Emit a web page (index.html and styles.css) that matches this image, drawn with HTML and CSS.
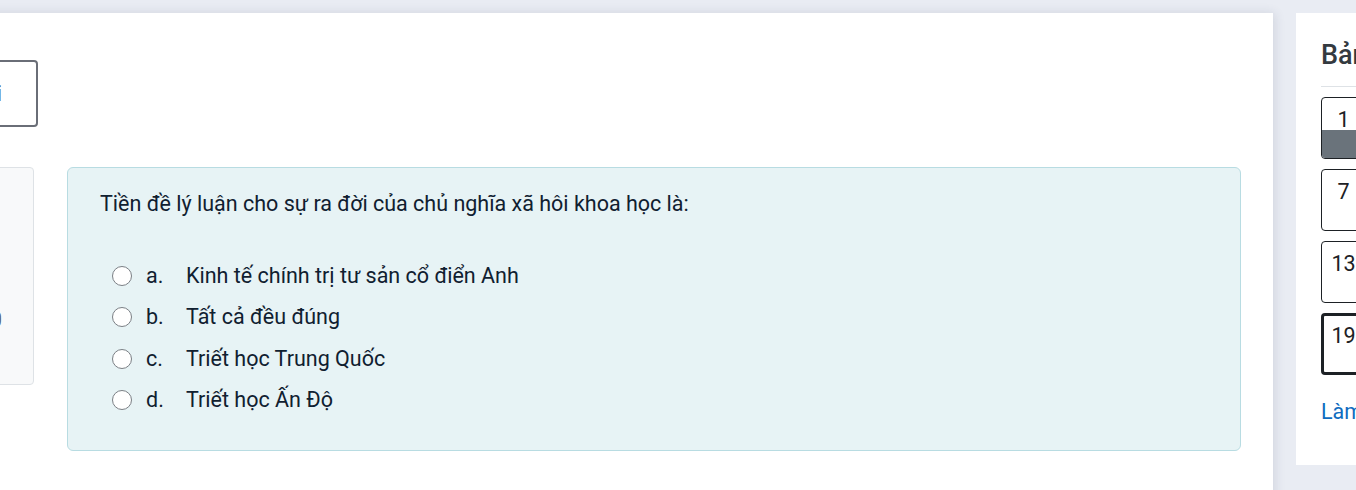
FILE: index.html
```html
<!DOCTYPE html>
<html lang="vi">
<head>
<meta charset="utf-8">
<link rel="stylesheet" href="styles.css">
</head>
<body>
<div class="page">
  <main class="main">
    <div class="topbar">
      <button class="btn-outline">Lưu và thoát khỏi bài thi</button>
    </div>
    <div class="que">
      <div class="info">
        <h3 class="no">Câu hỏi <b>19</b></h3>
        <div class="state">Chưa trả lời</div>
        <div class="grade">Đạt điểm 1,00</div>
      </div>
      <div class="content">
        <div class="formulation">
          <div class="qtext">Tiền đề lý luận cho sự ra đời của chủ nghĩa xã hôi khoa học là:</div>
          <div class="answer">
            <label class="opt"><span class="radio"></span><span class="letter">a.</span><span>Kinh tế chính trị tư sản cổ điển Anh</span></label>
            <label class="opt"><span class="radio"></span><span class="letter">b.</span><span>Tất cả đều đúng</span></label>
            <label class="opt"><span class="radio"></span><span class="letter">c.</span><span>Triết học Trung Quốc</span></label>
            <label class="opt"><span class="radio"></span><span class="letter">d.</span><span>Triết học Ấn Độ</span></label>
          </div>
        </div>
      </div>
    </div>
  </main>
  <aside class="side">
    <h2 class="side-title">Bảng câu hỏi</h2>
    <div class="qnav">
      <div class="qbtn answered"><span class="num">1</span><span class="fill"></span></div>
      <div class="qbtn"><span class="num">7</span><span class="fill"></span></div>
      <div class="qbtn"><span class="num">13</span><span class="fill"></span></div>
      <div class="qbtn current"><span class="num">19</span><span class="fill"></span></div>
    </div>
    <a class="finish" href="#">Làm xong...</a>
  </aside>
</div>
</body>
</html>
```

FILE: styles.css
```css
* { box-sizing: border-box; }
html, body { margin: 0; padding: 0; }
body {
  width: 1356px;
  height: 490px;
  overflow: hidden;
  background: #e9ecf3;
  font-family: Roboto, "Noto Sans", sans-serif;
  color: #1d2125;
}
.page {
  display: flex;
  align-items: flex-start;
  gap: 23px;
  padding-top: 13px;
  margin-left: -300px;
}
.main {
  flex: 0 0 1573px;
  height: 520px;
  background: #fff;
  box-shadow: 2px 0 10px rgba(40, 50, 80, 0.12);
  padding: 0 32px 0 0;
}
.topbar {
  height: 154px;
  padding-top: 47px;
  display: flex;
  justify-content: flex-start;
}
.btn-outline {
  margin-left: 38px;
  width: 300px;
  height: 67px;
  border: 2px solid #6a6e77;
  border-radius: 4px;
  background: #fff;
  color: #3d4046;
  font-family: Roboto, sans-serif;
  font-size: 21.5px;
  text-align: right;
  padding: 0 34px 0 0;
  white-space: nowrap;
}
.que {
  display: flex;
  align-items: flex-start;
  gap: 33px;
}
.info {
  margin-left: 134px;
  width: 200px;
  height: 218px;
  background: #f8f9fa;
  border: 1px solid #dee2e6;
  border-radius: 4px;
  padding: 14px 31px 14px 10px;
  font-size: 21.5px;
  color: #5a5f66;
}
.info .no { font-size: 21.5px; font-weight: 400; margin: 0 0 40px; white-space: nowrap; }
.info .state { margin-bottom: 34px; white-space: nowrap; }
.info .grade { text-align: right; white-space: nowrap; line-height: 28px; }
.content { flex: 1; }
.formulation {
  width: 1174px;
  height: 284px;
  background: #e7f3f5;
  border: 1px solid #b8dce2;
  border-radius: 6px;
  padding: 22px 32px;
  font-size: 21.5px;
  color: #102030;
}
.qtext { line-height: 28px; margin-bottom: 43px; }
.answer { padding-left: 12px; display: flex; flex-direction: column; gap: 11.3px; }
.opt { display: flex; align-items: center; height: 30px; line-height: 30px; }
.radio {
  width: 20px;
  height: 20px;
  border: 1.5px solid #7b7f85;
  border-radius: 50%;
  background: #fff;
  margin-right: 14px;
  flex: none;
}
.letter { width: 40px; flex: none; }
.side {
  flex: 0 0 300px;
  height: 452px;
  background: #fff;
  padding: 22px 25px;
}
.side-title {
  margin: 0;
  font-size: 27px;
  font-weight: 500;
  line-height: 40px;
  white-space: nowrap;
  padding-bottom: 11px;
  border-bottom: 1px solid #dee2e6;
  margin-bottom: 10px;
  color: #343a40;
}
.qnav { display: flex; flex-direction: column; gap: 10px; }
.qbtn {
  width: 45px;
  height: 62px;
  border: 1px solid #1d2125;
  border-radius: 4px;
  overflow: hidden;
  display: flex;
  flex-direction: column;
  background: #fff;
}
.qbtn .num {
  height: 32px;
  padding-top: 10px;
  line-height: 24px;
  text-align: center;
  font-size: 21.5px;
  color: #1d2125;
}
.qbtn .fill { flex: 1; }
.qbtn.answered .fill { background: #6a737b; }
.qbtn.current { border: 3px solid #1d2125; }
.qbtn.current .num { padding-top: 8px; height: 30px; }
.finish {
  display: block;
  margin-top: 24px;
  color: #0f6cbf;
  text-decoration: none;
  font-size: 21.5px;
  white-space: nowrap;
}
```
